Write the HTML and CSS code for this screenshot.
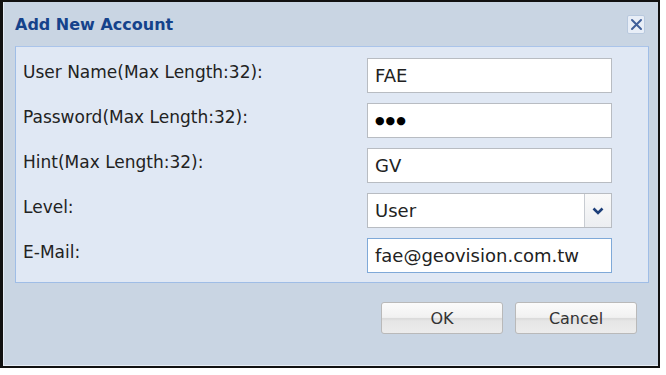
FILE: index.html
```html
<!DOCTYPE html>
<html lang="en">
<head>
    <meta charset="UTF-8">
    <title>Add New Account</title>
    <link rel="stylesheet" href="styles.css">
</head>
<body>
    <div class="dialog">
        <div class="dialog-header">
            <span class="dialog-title">Add New Account</span>
            <span class="close-btn">
                <svg width="13" height="13" viewBox="0 0 13 13">
                    <path d="M2 2 L11 11 M11 2 L2 11" stroke="#3f5f9a" stroke-width="2" stroke-linecap="round"/>
                </svg>
            </span>
        </div>

        <div class="form-panel">
            <div class="form-row">
                <label class="form-label">User Name(Max Length:32):</label>
                <div class="field">FAE</div>
            </div>
            <div class="form-row">
                <label class="form-label">Password(Max Length:32):</label>
                <div class="field field-pass">&#9679;&#9679;&#9679;</div>
            </div>
            <div class="form-row">
                <label class="form-label">Hint(Max Length:32):</label>
                <div class="field">GV</div>
            </div>
            <div class="form-row">
                <label class="form-label">Level:</label>
                <div class="field field-combo">
                    <span class="combo-text">User</span>
                    <span class="combo-trigger">
                        <svg width="12" height="8" viewBox="0 0 12 8">
                            <path d="M1.5 1.5 L6 6 L10.5 1.5" fill="none" stroke="#1d3f7a" stroke-width="2.6"/>
                        </svg>
                    </span>
                </div>
            </div>
            <div class="form-row">
                <label class="form-label">E-Mail:</label>
                <div class="field field-focus">fae@geovision.com.tw</div>
            </div>
        </div>

        <div class="button-bar">
            <button class="btn">OK</button>
            <button class="btn">Cancel</button>
        </div>
    </div>
</body>
</html>
```

FILE: styles.css
```css
body {
    margin: 0;
    padding: 0;
    background: #ffffff;
    font-family: 'DejaVu Sans', Tahoma, sans-serif;
}
.dialog {
    box-sizing: border-box;
    width: 660px;
    height: 368px;
    background: #c9d5e3;
    border: 2px solid #111;
    border-left-width: 3px;
    box-shadow: inset 1px -1px 0 #e6edf5;
}
.dialog-header {
    height: 44px;
    display: flex;
    align-items: center;
    justify-content: space-between;
    padding: 0 12px 0 12px;
}
.dialog-title {
    color: #15428b;
    font-weight: bold;
    font-size: 16px;
    margin-top: 1px;
}
.close-btn {
    width: 18px;
    height: 19px;
    box-sizing: border-box;
    border: 1px solid #b9c9de;
    border-radius: 2px;
    background: #e8eef7;
    display: flex;
    align-items: center;
    justify-content: center;
    margin-right: 1px;
}
.form-panel {
    box-sizing: border-box;
    margin-left: 12px;
    width: 634px;
    height: 237px;
    background: #e0e8f4;
    border: 1px solid #9fbde6;
    border-top-color: #aac4ea;
    padding: 11px 0 0 7px;
    display: flex;
    flex-direction: column;
    gap: 10px;
}
.form-row {
    display: flex;
    align-items: flex-start;
    height: 35px;
}
.form-label {
    width: 344px;
    font-size: 17px;
    color: #222;
    padding-top: 4px;
}
.field {
    box-sizing: border-box;
    width: 245px;
    height: 35px;
    background: #fff;
    border: 1px solid #b8bcc2;
    font-size: 18px;
    color: #222;
    padding: 0 7px;
    display: flex;
    align-items: center;
}
.field-pass {
    font-size: 11px;
    letter-spacing: 1px;
    color: #000;
}
.field-focus {
    border-color: #7fa9d8;
}
.field-combo {
    padding: 0 0 0 7px;
    justify-content: space-between;
}
.combo-trigger {
    width: 27px;
    height: 100%;
    box-sizing: border-box;
    border-left: 1px solid #c8ccd2;
    background: linear-gradient(#fafafa, #eceef1);
    display: flex;
    align-items: center;
    justify-content: center;
}
.button-bar {
    display: flex;
    justify-content: flex-end;
    gap: 12px;
    padding: 19px 21px 0 0;
}
.btn {
    box-sizing: border-box;
    width: 122px;
    height: 32px;
    border: 1px solid #b9b9b9;
    border-radius: 3px;
    background: linear-gradient(#fbfbfb 0%, #f1f1f1 48%, #d9d9d9 52%, #e6e6e6 60%, #ececec 100%);
    font-family: 'DejaVu Sans', Tahoma, sans-serif;
    font-size: 16px;
    color: #333;
    padding: 0;
}
```
